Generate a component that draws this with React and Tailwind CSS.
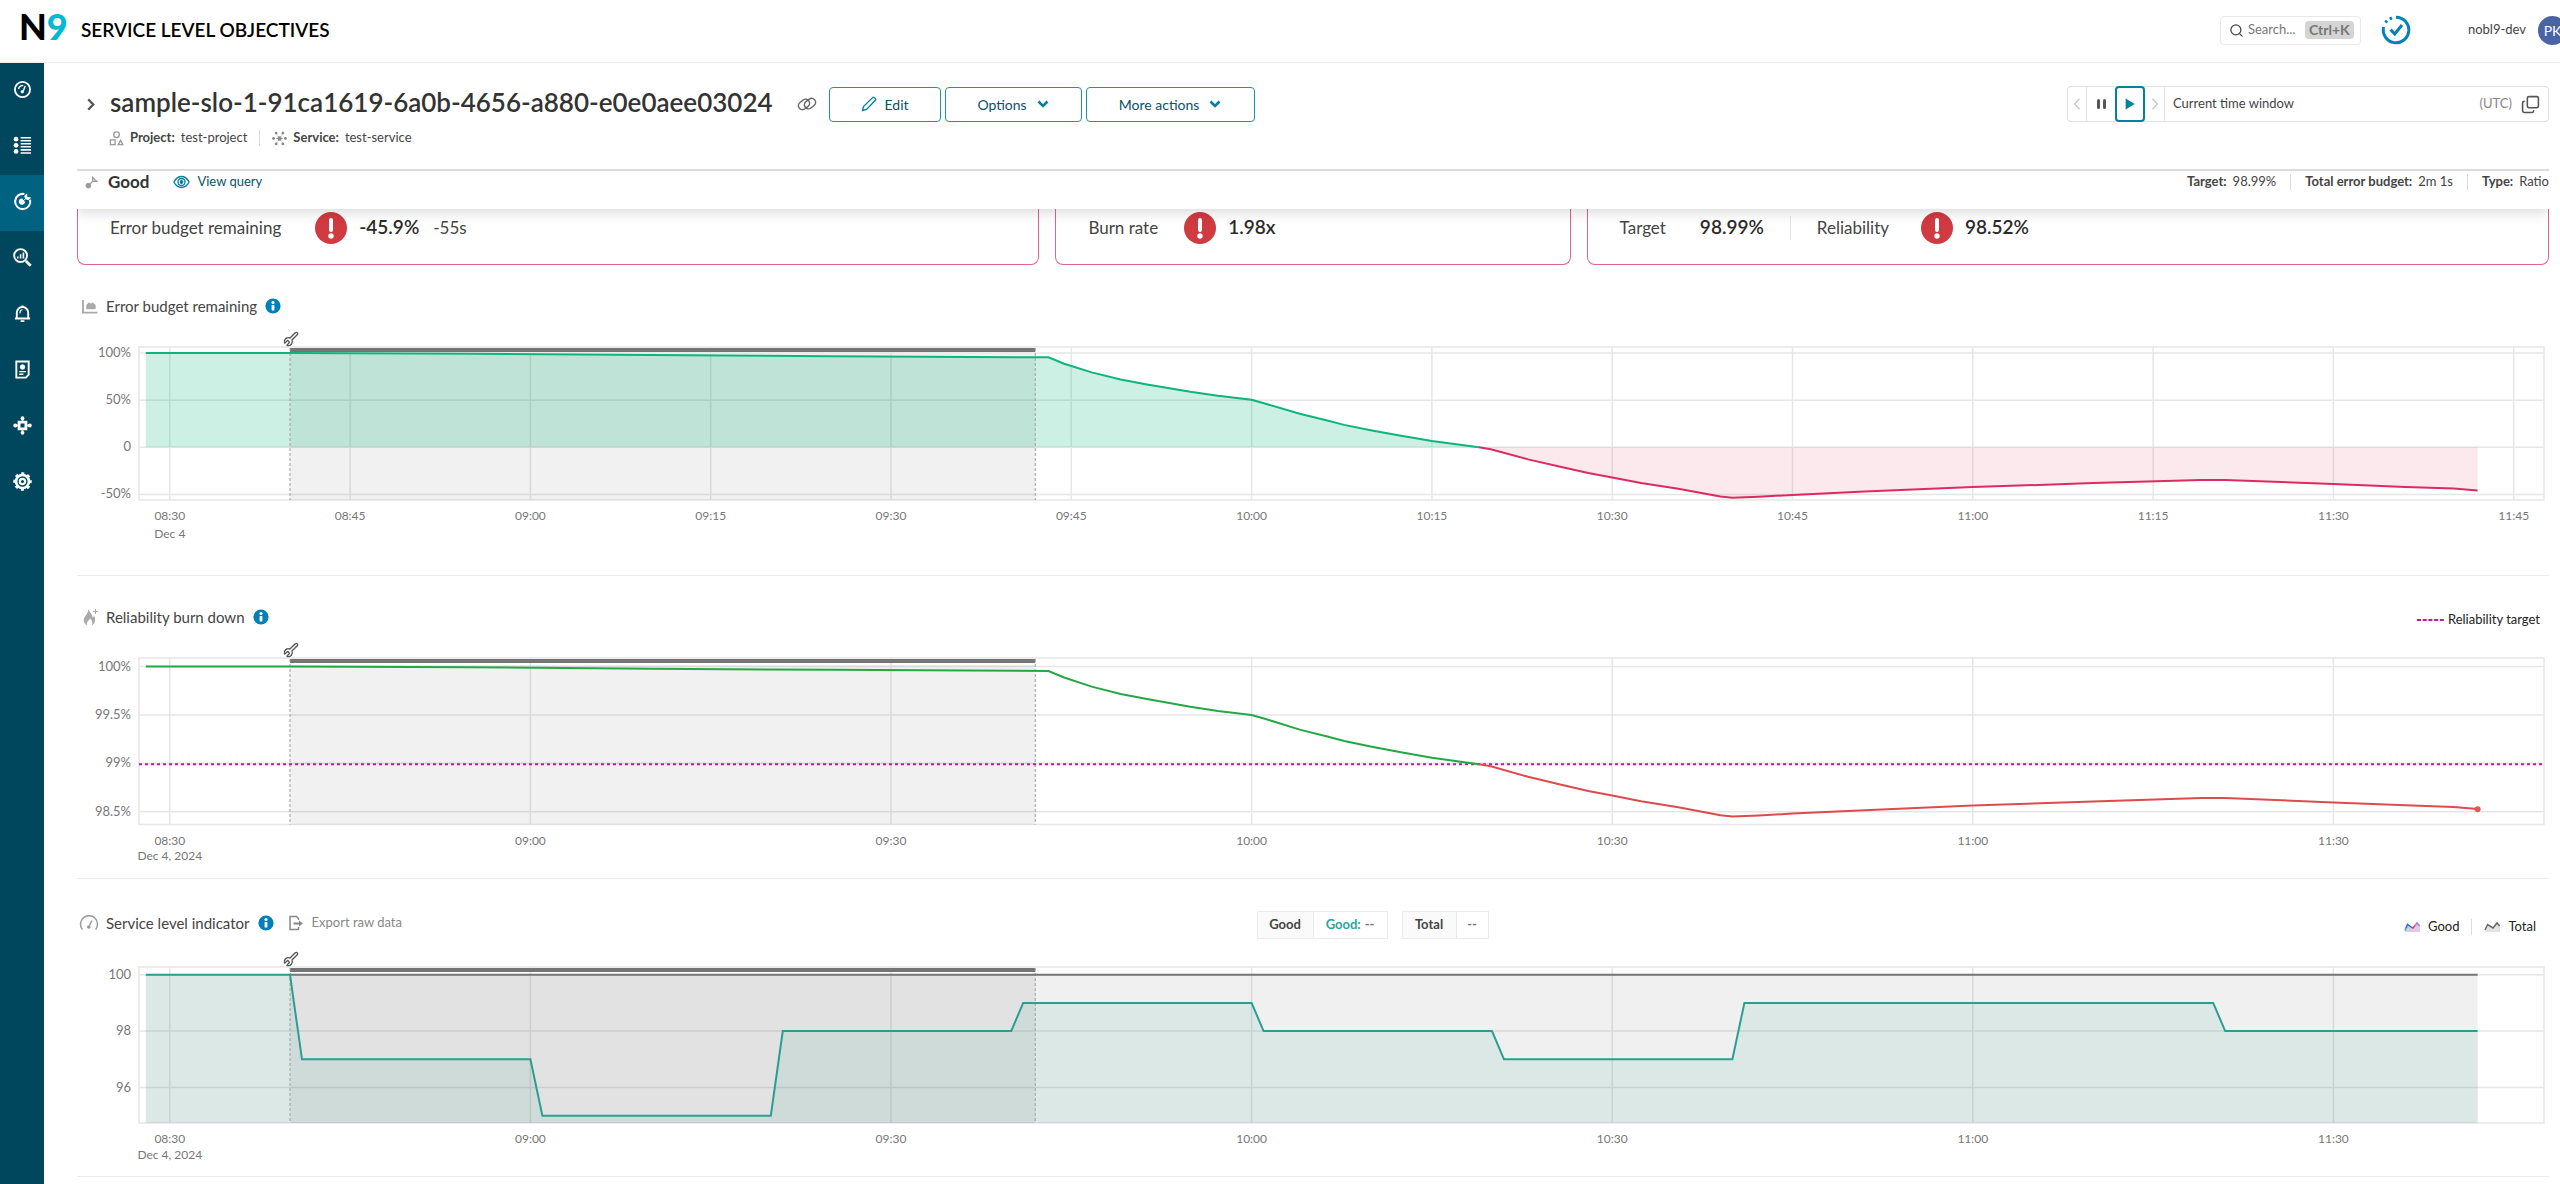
import React from "react";
import { Search, Copy, Wrench } from "lucide-react";

const X0 = 62;
const X1 = 2467;
const WIDTH = 2472;
// minutes after 08:30 -> x in the chart
const tx = (m) => 92.8 + 12.02 * m;
const pts = (list) => list.map(([x, y]) => `${x.toFixed(1)},${y.toFixed(1)}`).join(" ");

// remaining error budget: [minutes after 08:30, percent]
const BUDGET = [
  [-2, 100], [10, 100], [25, 99.2], [40, 97.8], [55, 96.6], [73.1, 95.4],
  [74.4, 88.7], [76.7, 79.4], [79.1, 72], [81.3, 66.7], [84.9, 58.9], [87.2, 54.6], [90, 50.4],
  [91.1, 46.5], [94, 35.5], [96.3, 28.4], [97.7, 23.8], [99.9, 18.1], [102.2, 12.8], [105, 6.7], [108.9, 0],
  [109.9, -2.1], [113, -12.8], [115.5, -20.2], [118, -27.3], [120, -31.9], [122.4, -37.9], [125.5, -44],
  [129, -52.1], [130, -53.5], [132.2, -52.5], [135, -50.5], [141, -47], [150, -42.2], [160, -38], [169, -34.6],
  [171, -34.6], [180, -39], [186, -42], [190, -43.8], [192, -45.9],
];
const ZERO_AT = BUDGET.findIndex((p) => p[1] === 0);

const SLI = [
  [-2, 100], [10, 100], [11, 97], [30, 97], [31, 95], [50, 95], [51, 98], [70, 98], [71, 99], [90, 99],
  [91, 98], [110, 98], [111, 97], [130, 97], [131, 99], [170, 99], [171, 98], [192, 98],
];

const QUARTERS = ["08:30", "08:45", "09:00", "09:15", "09:30", "09:45", "10:00", "10:15", "10:30", "10:45", "11:00", "11:15", "11:30", "11:45"];
const HALVES = ["08:30", "09:00", "09:30", "10:00", "10:30", "11:00", "11:30"];

function Frame({ label, height, top, bottom, yTicks, xTicks, step, date, dateY, children }) {
  return (
    <svg viewBox={`0 0 ${WIDTH} ${height}`} role="img" aria-label={label} className="block w-full" fontSize="12" fill="none">
      <g stroke="#e6e6e6" strokeWidth="1.5">
        <rect x={X0} y={top} width={X1 - X0} height={bottom - top} />
        {yTicks.map(([t, y]) => (
          <line key={t} x1={X0} x2={X1} y1={y} y2={y} />
        ))}
        {xTicks.map((t, i) => (
          <line key={t} x1={tx(i * step)} x2={tx(i * step)} y1={top} y2={bottom} />
        ))}
      </g>
      {children}
      <g fill="#777">
        {yTicks.map(([t, y]) => (
          <text key={t} x="54" y={y + 4} textAnchor="end" fontSize="13">{t}</text>
        ))}
        {xTicks.map((t, i) => (
          <text key={t} x={tx(i * step)} y={bottom + 20} textAnchor="middle">{t}</text>
        ))}
        <text x={tx(0)} y={dateY} textAnchor="middle">{date}</text>
      </g>
    </svg>
  );
}

// adjusted period, 08:40 - 09:42
function Adjustment({ top, bottom }) {
  return (
    <g>
      <rect x={tx(10)} y={top + 7} width={tx(72) - tx(10)} height={bottom - top - 7} fill="#000" fillOpacity=".055" />
      <rect x={tx(10)} y={top + 1} width={tx(72) - tx(10)} height="4" fill="#757575" />
      <g stroke="#a0a0a0" strokeWidth="1" strokeDasharray="3 2">
        <line x1={tx(10)} x2={tx(10)} y1={top + 1} y2={bottom} />
        <line x1={tx(72)} x2={tx(72)} y1={top + 1} y2={bottom} />
      </g>
      <g transform={`rotate(180 ${tx(10) + 1} ${top - 8})`}>
        <Wrench x={tx(10) - 7} y={top - 16} width={16} height={16} color="#555" strokeWidth={2} />
      </g>
    </g>
  );
}

function BudgetChart() {
  const top = 29, bottom = 182, zero = 129.3;
  const y = (v) => zero - v * 0.943;
  const p = BUDGET.map(([m, v]) => [tx(m), y(v)]);
  const good = p.slice(0, ZERO_AT + 1);
  const bad = p.slice(ZERO_AT);
  return (
    <Frame label="Error budget remaining chart" height={257} top={top} bottom={bottom}
      yTicks={[["100%", y(100)], ["50%", y(50)], ["0", y(0)], ["-50%", y(-50)]]}
      xTicks={QUARTERS} step={15} date="Dec 4" dateY={220}>
      <polygon points={pts([[tx(-2), zero], ...good])} fill="#00b876" fillOpacity=".2" />
      <polygon points={pts([...bad, [tx(192), zero]])} fill="#dc2454" fillOpacity=".1" />
      <Adjustment top={top} bottom={bottom} />
      <polyline points={pts(good)} stroke="#0db57a" strokeWidth="2" />
      <polyline points={pts(bad)} stroke="#dc2a62" strokeWidth="2" />
    </Frame>
  );
}

function BurnDownChart() {
  const top = 29, bottom = 195.5;
  const y = (v) => 37.5 + (100 - v) * 96.8;
  const p = BUDGET.map(([m, v]) => [tx(m), y(98.99 + v * 0.0101)]);
  const end = p[p.length - 1];
  return (
    <Frame label="Reliability burn down chart" height={249} top={top} bottom={bottom}
      yTicks={[["100%", y(100)], ["99.5%", y(99.5)], ["99%", y(99)], ["98.5%", y(98.5)]]}
      xTicks={HALVES} step={30} date="Dec 4, 2024" dateY={231}>
      <Adjustment top={top} bottom={bottom} />
      <line x1={X0} x2={X1} y1={y(98.99)} y2={y(98.99)} stroke="#c5149e" strokeWidth="2" strokeDasharray="3 3" />
      <polyline points={pts(p.slice(0, ZERO_AT + 1))} stroke="#24a844" strokeWidth="2" />
      <polyline points={pts(p.slice(ZERO_AT))} stroke="#dc4c4c" strokeWidth="2" />
      <circle cx={end[0]} cy={end[1]} r="3" fill="#e85555" />
    </Frame>
  );
}

function IndicatorChart() {
  const top = 28, bottom = 184;
  const y = (v) => 35.7 + (100 - v) * 28.2;
  const p = SLI.map(([m, v]) => [tx(m), y(v)]);
  return (
    <Frame label="Service level indicator chart" height={237} top={top} bottom={bottom}
      yTicks={[["100", y(100)], ["98", y(98)], ["96", y(96)]]}
      xTicks={HALVES} step={30} date="Dec 4, 2024" dateY={220}>
      <rect x={tx(-2)} y={y(100)} width={tx(192) - tx(-2)} height={bottom - y(100)} fill="#757575" fillOpacity=".11" />
      <polygon points={pts([[tx(-2), bottom], ...p, [tx(192), bottom]])} fill="#2aa898" fillOpacity=".1" />
      <Adjustment top={top} bottom={bottom} />
      <line x1={tx(10)} x2={tx(192)} y1={y(100)} y2={y(100)} stroke="#757575" strokeWidth="2" />
      <polyline points={pts(p)} stroke="#2a9f90" strokeWidth="2" />
    </Frame>
  );
}

const s = { fill: "none", stroke: "currentColor", strokeWidth: 2 };
const NAV = [
  ["Dashboard", <g {...s}><circle cx="10" cy="10" r="8" /><path d="M5.8 9.5a4.5 4.5 0 0 1 5-3.6M12.8 6.2 10.6 12" strokeWidth="1.5" /><circle cx="9.8" cy="12.4" r="1.3" fill="currentColor" strokeWidth="1" /></g>],
  ["Catalog", <g {...s}><path d="M8 1.8h11M8 5h11M8 8.2h11M8 11.4h11M8 14.6h11M8 17.8h11" strokeWidth="1.6" /><g fill="currentColor" stroke="none"><circle cx="3.2" cy="3.4" r="2.5" /><circle cx="3.2" cy="9.8" r="2.5" /><circle cx="3.2" cy="16.2" r="2.5" /></g></g>],
  ["Service level objectives", <g {...s}><path d="M12 2.2a8 8 0 1 0 6 6" strokeWidth="2.2" /><path d="M12 10a2.6 2.6 0 1 1-2-2.4" fill="currentColor" strokeWidth="1.5" /><path d="m9.6 10.4 5-4.6M14.4 2l.2 3.8 3.8.4-2.2 1.8-3-.8-.8-3z" fill="currentColor" strokeWidth="1" /></g>],
  ["Search", <g {...s}><circle cx="8" cy="8" r="6.8" /><path d="M5 9v2M8 6.6v4.4M11 4.8V11" strokeWidth="1.7" /><path d="m13.6 13.6 5 5" strokeWidth="3" /></g>],
  ["Alerts", <g {...s}><path d="M2 15.2h16M4 15V9.2a6 6 0 0 1 12 0V15" /><path d="M7.4 10V8.6A2.8 2.8 0 0 1 10 6" strokeWidth="1.2" /><path d="M8 18h4M10 1.5v2" /></g>],
  ["Reports", <g {...s}><path d="M3.5 1.5h13v14l-3 3h-10z" /><circle cx="10" cy="7.4" r="2.4" fill="currentColor" strokeWidth="1" /><path d="M6.6 12.2h7M6.6 15h4.4" strokeWidth="1.4" /></g>],
  ["Integrations", <g {...s}><path d="M6.4 6.4h7.2v7.2H6.4z" strokeWidth="3" /><g fill="currentColor" stroke="none"><circle cx="10" cy="2.3" r="2" /><circle cx="10" cy="17.7" r="2" /><circle cx="2.3" cy="10" r="2" /><circle cx="17.7" cy="10" r="2" /></g><path d="M10 2v3M10 15v3M2 10h3M15 10h3" /></g>],
  ["Settings", <g {...s}><circle cx="10" cy="10" r="6.8" strokeWidth="2.8" /><circle cx="10" cy="10" r="2.8" strokeWidth="2.4" /><circle cx="10" cy="10" r="8.7" strokeDasharray="3.4 3.43" strokeDashoffset="1.7" strokeWidth="2" /></g>],
];

const Divider = () => <span className="h-4 w-px bg-[#dcdcdc]" />;

function Info({ label }) {
  return (
    <button type="button" aria-label={`About ${label}`} className="ml-2">
      <svg viewBox="0 0 16 16" className="size-4"><circle cx="8" cy="8" r="7.6" fill="#0080b8" /><circle cx="8" cy="4.6" r="1.6" fill="#fff" /><rect x="6.6" y="7" width="2.8" height="5.4" rx=".6" fill="#fff" /></svg>
    </button>
  );
}

function Alert() {
  return (
    <svg viewBox="0 0 32 32" className="size-8 shrink-0"><circle cx="16" cy="16" r="16" fill="#d03a41" /><path d="M16 8v10" stroke="#fff" strokeWidth="4" strokeLinecap="round" /><circle cx="16" cy="24" r="2.7" fill="#fff" /></svg>
  );
}

const Chevron = () => (
  <svg viewBox="0 0 12 8" className="h-2 w-3"><path d="m1.5 1.5 4.5 4.5 4.5-4.5" fill="none" stroke="#007f9e" strokeWidth="2.6" /></svg>
);

function Action({ children, className }) {
  return (
    <button type="button" className={`flex h-[35px] items-center justify-center rounded border border-[#1b93ab] text-[14px] text-[#0a5268] ${className}`}>
      {children}
    </button>
  );
}

function LegendIcon({ mono }) {
  return (
    <svg viewBox="0 0 16 12" className="h-3 w-4">
      <path d="M1 10 4 4l5 3 4-5 3 3v6H1z" fill={mono ? "#e2e2e2" : "#dccbe6"} />
      {mono ? (
        <path d="m1 9 2.6-5.5L9 7l4-5 2.6 3" fill="none" stroke="#666" strokeWidth="1.5" />
      ) : (
        <g fill="none" strokeWidth="1.5"><path d="m1 9.5 1.2-3" stroke="#19b5a5" /><path d="m2 7 1.6-3.5L7 6" stroke="#2b66d9" /><path d="m7 6 2 1 2-2.6" stroke="#d1416b" /><path d="m11 4.4 2-2.4 2.6 3" stroke="#b66fd6" /></g>
      )}
    </svg>
  );
}

const card = "flex h-14 items-center rounded-b-lg border-x border-b border-[#e3648b] pb-[18px] pl-8 text-[17px] text-[#444]";
const value = "text-[19px] font-semibold text-[#2b2b2b]";

export default function App() {
  return (
    <div className="flex min-h-screen flex-col overflow-hidden bg-white font-['Lato',sans-serif] text-[13px] text-[#444]">
      <header className="flex h-[63px] items-center border-b border-[#ececec] pb-[2px] pl-[19px]">
        <a href="#home" aria-label="Nobl9" className="w-[62px] pb-2 text-[36px] leading-none font-black whitespace-nowrap text-black">
          N<span className="text-[#00b9d3]">9</span>
        </a>
        <h1 className="text-[19px] font-semibold text-black">SERVICE LEVEL OBJECTIVES</h1>
        <label className="ml-auto flex h-[29px] w-[141px] items-center rounded border border-[#e8e8e8] pl-2">
          <Search className="size-[15px] text-[#444]" aria-hidden="true" />
          <input aria-label="Search" placeholder="Search..." className="ml-1 w-[57px] outline-none placeholder:text-[#777]" />
          <kbd className="rounded-sm bg-[#d4d4d4] px-1 font-['Lato',sans-serif] text-[14px] leading-[18px] font-bold text-[#777]">Ctrl+K</kbd>
        </label>
        <button type="button" aria-label="Status" className="ml-5">
          <svg viewBox="0 0 30 30" className="size-[30px]" fill="none" stroke="#0083ba" strokeWidth="3"><path d="M15 2.2A12.8 12.8 0 1 1 2.6 12" /><path d="M4.4 7.6 6 5.8M8.6 4 11 2.8" /><path d="m9.6 14.6 4.2 4.4 7.2-9" /></svg>
        </button>
        <span className="ml-[57px] whitespace-nowrap">nobl9-dev</span>
        <button type="button" aria-label="Account" className="-mr-[7px] ml-3 size-[29px] shrink-0 rounded-full bg-[#4a63a3] text-[14px] text-white">PK</button>
      </header>

      <div className="flex grow">
        <nav className="w-11 shrink-0 bg-[#00465c]">
          {NAV.map(([name, icon]) => (
            <a key={name} href="#nav" aria-label={name}
              className={`flex h-14 items-center justify-center pb-[3px] text-white ${name === "Service level objectives" ? "bg-[#006281]" : ""}`}>
              <svg viewBox="0 0 20 20" className="size-[19px] overflow-visible">{icon}</svg>
            </a>
          ))}
        </nav>

        <main className="min-w-0 grow pr-[11px] pl-[33px]">
          <div className="flex items-center pt-[23px]">
            <button type="button" aria-label="Expand" className="ml-[9px] w-6">
              <svg viewBox="0 0 10 14" className="h-[13px] w-[10px]" fill="none" stroke="#555" strokeWidth="2.4"><path d="m2 1.5 5.5 5.5L2 12.5" /></svg>
            </button>
            <h2 className="pb-1 text-[26px] leading-none font-semibold text-[#333]">sample-slo-1-91ca1619-6a0b-4656-a880-e0e0aee03024</h2>
            <button type="button" aria-label="Copy link" className="mr-3 ml-6">
              <svg viewBox="0 0 20 16" className="h-4 w-5" fill="none" stroke="#666" strokeWidth="1.5"><rect x="1" y="4.4" width="12" height="8" rx="4" transform="rotate(-38 7 8.4)" /><rect x="7" y="3.6" width="12" height="8" rx="4" transform="rotate(-38 13 7.6)" /></svg>
            </button>
            <div className="flex gap-1">
              <Action className="w-28 gap-2">
                <svg viewBox="0 0 16 16" className="size-4" fill="none" stroke="#007f9e" strokeWidth="1.3"><path d="m1.5 14.5 1-4L11.6 1.6a1.3 1.3 0 0 1 1.8 0l.9.9a1.3 1.3 0 0 1 0 1.8l-8.8 9.1z" /></svg>
                Edit
              </Action>
              <Action className="w-[137px] gap-[10px]">Options <Chevron /></Action>
              <Action className="w-[169px] gap-[10px]">More actions <Chevron /></Action>
            </div>
            <div className="ml-auto flex h-9 items-center rounded border border-[#e2e2e2]">
              <button type="button" aria-label="Previous window" className="flex h-full w-[19px] items-center justify-center border-r border-[#e2e2e2]">
                <svg viewBox="0 0 8 12" className="h-3 w-2" fill="none" stroke="#c4c4c4" strokeWidth="1.3"><path d="M6.5 1 1.5 6l5 5" /></svg>
              </button>
              <button type="button" aria-label="Pause" className="flex h-full w-7 items-center justify-center gap-[3px]">
                <span className="h-[10px] w-[3px] rounded-sm bg-[#555]" /><span className="h-[10px] w-[3px] rounded-sm bg-[#555]" />
              </button>
              <button type="button" aria-label="Play" className="flex h-9 w-[30px] items-center justify-center rounded border-2 border-[#00819c]">
                <svg viewBox="0 0 10 12" className="h-3 w-[10px]"><path d="M.6.6 9.6 6 .6 11.4z" fill="#00819c" /></svg>
              </button>
              <button type="button" aria-label="Next window" className="flex h-full w-5 items-center justify-center border-r border-[#e2e2e2]">
                <svg viewBox="0 0 8 12" className="h-3 w-2" fill="none" stroke="#c4c4c4" strokeWidth="1.3"><path d="m1.5 1 5 5-5 5" /></svg>
              </button>
              <button type="button" className="flex w-[383px] items-center px-2">
                Current time window <span className="ml-auto text-[#888]">(UTC)</span>
                <Copy className="ml-[9px] size-[19px] -scale-y-100 text-[#555]" aria-hidden="true" />
              </button>
            </div>
          </div>

          <div className="mt-[6px] mb-[21px] flex h-5 items-center gap-[6px] pl-8 text-[13px]">
            <svg viewBox="0 0 16 16" className="size-[15px]" fill="none" stroke="#999" strokeWidth="1.4"><circle cx="8" cy="4" r="3" /><path d="M1.5 9.5h5v5h-5zM12.3 10l2.5 4.5H9.8z" /></svg>
            <strong className="text-[#444]">Project:</strong> <span>test-project</span>
            <span className="mx-[6px] flex"><Divider /></span>
            <svg viewBox="0 0 16 16" className="size-[15px]" fill="#888" stroke="#888"><circle cx="8" cy="8" r="1.8" /><path d="M8 8 4.6 2.4M8 8l3.4-5.6M8 8H1.4M8 8h6.6M8 8l-3.4 5.6M8 8l3.4 5.6" strokeDasharray="3.4 1.6 3" strokeWidth=".9" /><g stroke="none"><circle cx="4.4" cy="2.2" r="1.5" /><circle cx="11.6" cy="2.2" r="1.5" /><circle cx="1.6" cy="8" r="1.5" /><circle cx="14.4" cy="8" r="1.5" /><circle cx="4.4" cy="13.8" r="1.5" /><circle cx="11.6" cy="13.8" r="1.5" /></g></svg>
            <strong className="text-[#444]">Service:</strong> <span>test-service</span>
          </div>

          <div className="relative z-10 flex h-10 items-center border-t-2 border-[#dcdcdc] bg-white pb-4 pl-2 shadow-[0_3px_14px_rgba(0,0,0,0.16)] [clip-path:inset(0_0_-20px_0)]">
            <svg viewBox="0 0 14 14" className="size-[13px]" fill="none" stroke="#999"><circle cx="3.6" cy="10.4" r="2.6" fill="#999" /><path d="m3.6 10.4 5-5M8.2 1.4v4.4h4.6L10.6 4z" strokeWidth="1.3" /></svg>
            <strong className="ml-[10px] text-[17px] font-bold text-[#333]">Good</strong>
            <a href="#query" className="ml-6 flex items-center gap-[7px] text-[#0a5268]">
              <svg viewBox="0 0 18 14" className="h-[14px] w-[17px]" fill="none" stroke="#007f9e" strokeWidth="1.4"><path d="M1 7c2-4 5-5.8 8-5.8S15 3 17 7c-2 4-5 5.8-8 5.8S3 11 1 7z" /><circle cx="9" cy="7" r="3.7" /><circle cx="9" cy="7" r="1.3" fill="#007f9e" /></svg>
              View query
            </a>
            <dl className="ml-auto flex items-center gap-[6px]">
              <dt className="font-bold">Target:</dt><dd>98.99%</dd>
              <dd className="mx-2 flex"><Divider /></dd>
              <dt className="font-bold">Total error budget:</dt><dd>2m 1s</dd>
              <dd className="mx-2 flex"><Divider /></dd>
              <dt className="font-bold">Type:</dt><dd>Ratio</dd>
            </dl>
          </div>

          <div className="grid grid-cols-[962fr_515fr_962fr] gap-4">
            <div className={card}>
              <span className="mr-[34px]">Error budget remaining</span><Alert />
              <span className={`${value} ml-3`}>-45.9%</span><span className="ml-[14px]">-55s</span>
            </div>
            <div className={card}>
              <span className="mr-[26px]">Burn rate</span><Alert /><span className={`${value} ml-3`}>1.98x</span>
            </div>
            <div className={card}>
              <span className="mr-[34px]">Target</span><span className={value}>98.99%</span>
              <span className="mx-[26px] h-6 w-px bg-[#e4e4e4]" />
              <span className="mr-8">Reliability</span><Alert /><span className={`${value} ml-3`}>98.52%</span>
            </div>
          </div>

          <section className="border-b border-[#ececec] pt-[29px]">
            <div className="flex h-6 items-center pl-1">
              <svg viewBox="0 0 18 16" className="mr-[7px] h-[15px] w-[18px]" fill="none" stroke="#aaa" strokeWidth="2"><path d="M1.5 1v13.5H17" /><path d="M5 11V6.5L8 3.5 10 5l1.6-1.5 3.4 3V11z" fill="#aaa" stroke="none" /></svg>
              <h3 className="text-[15px]">Error budget remaining</h3><Info label="error budget" />
            </div>
            <BudgetChart />
          </section>

          <section className="border-b border-[#ececec] pt-[29px]">
            <div className="flex h-6 items-center pr-[9px] pl-1">
              <svg viewBox="0 0 18 18" className="mr-[7px] size-[18px]" fill="#aaa"><path d="M7.5.8c.4 3 4 5.4 4.2 8.8.9-.5 1.2-1.4 1.1-2.4 2.2 3.4 1.8 8-1.8 10.2.8-2.8.2-5-1.9-6.8-1.5 2-3.9 3.6-3 6.8C2.2 15.4 1.8 11 4.4 8 6 6 7.4 4 7.5.8z" /><path d="M14.5 1v5M12 3.5h5" stroke="#aaa" /></svg>
              <h3 className="text-[15px]">Reliability burn down</h3><Info label="reliability" />
              <span className="ml-auto flex items-center gap-1 pt-[6px] text-[#222]">
                <svg viewBox="0 0 27 2" className="h-[2px] w-[27px]"><path d="M0 1h27" stroke="#c5149e" strokeWidth="2" strokeDasharray="4 1.7" /></svg>
                Reliability target
              </span>
            </div>
            <BurnDownChart />
          </section>

          <section className="border-b border-[#ececec] pt-8">
            <div className="grid h-7 grid-cols-[1fr_auto_1fr] items-start pr-[13px] pl-[2px]">
              <div className="flex h-6 items-center">
                <svg viewBox="0 0 20 16" className="mr-[7px] h-4 w-5" fill="none" stroke="#999" strokeWidth="1.5"><path d="M3.4 14.5a8.5 8.5 0 1 1 13.2 0M13 5.5l-2.6 5" /><circle cx="9.8" cy="12" r="1.8" fill="#999" stroke="none" /></svg>
                <h3 className="text-[15px]">Service level indicator</h3><Info label="service level indicator" />
                <button type="button" className="ml-[14px] flex items-center gap-2 text-[#888]">
                  <svg viewBox="0 0 16 16" className="size-4" fill="none" stroke="#888" strokeWidth="1.5"><path d="M10.5 5V3.5L8.5 1.5H2v13h8.5V12" /><path d="M5.5 8.5H12" strokeWidth="2" /><path d="m11 5.5 4 3-4 3z" fill="#888" stroke="none" /></svg>
                  Export raw data
                </button>
              </div>
              <div className="flex h-7 gap-[14px] pl-[130px] text-[13px] font-bold">
                <div className="flex border border-[#ebebeb]">
                  <span className="flex w-14 items-center justify-center border-r border-[#ebebeb] bg-[#fafafa]">Good</span>
                  <span className="flex w-[73px] items-center justify-center gap-1 text-[#2aa898]">Good: <span className="text-[#777]">--</span></span>
                </div>
                <div className="flex border border-[#ebebeb]">
                  <span className="flex w-[54px] items-center justify-center border-r border-[#ebebeb] bg-[#fafafa]">Total</span>
                  <span className="flex w-[31px] items-center justify-center text-[#777]">--</span>
                </div>
              </div>
              <div className="flex h-7 items-center justify-end pt-1 text-[#222]">
                <LegendIcon /><span className="ml-2">Good</span>
                <span className="mx-3 flex"><Divider /></span>
                <LegendIcon mono /><span className="ml-2">Total</span>
              </div>
            </div>
            <IndicatorChart />
          </section>
        </main>
      </div>
    </div>
  );
}
